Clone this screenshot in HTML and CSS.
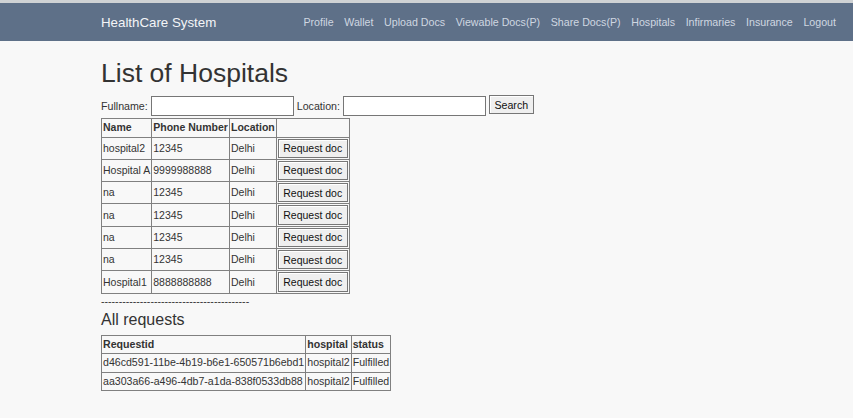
FILE: index.html
```html
<!DOCTYPE html>
<html>
<head>
<meta charset="utf-8">
<title>HealthCare System</title>
<link rel="stylesheet" href="styles.css">
</head>
<body>
<nav class="navbar">
  <a class="brand" href="#">HealthCare System</a>
  <ul class="nav-links">
    <li><a href="#">Profile</a></li>
    <li><a href="#">Wallet</a></li>
    <li><a href="#">Upload Docs</a></li>
    <li><a href="#">Viewable Docs(P)</a></li>
    <li><a href="#">Share Docs(P)</a></li>
    <li><a href="#">Hospitals</a></li>
    <li><a href="#">Infirmaries</a></li>
    <li><a href="#">Insurance</a></li>
    <li><a href="#">Logout</a></li>
  </ul>
</nav>
<main class="content">
  <h1 class="title">List of Hospitals</h1>
  <form class="search-form">
    <label>Fullname:</label>
    <input type="text" class="field">
    <label>Location:</label>
    <input type="text" class="field">
    <button type="button" class="btn search-btn">Search</button>
  </form>
  <table class="grid hospitals">
    <tr><th>Name</th><th>Phone Number</th><th>Location</th><th></th></tr>
    <tr><td>hospital2</td><td>12345</td><td>Delhi</td><td><button type="button" class="btn">Request doc</button></td></tr>
    <tr><td>Hospital A</td><td>9999988888</td><td>Delhi</td><td><button type="button" class="btn">Request doc</button></td></tr>
    <tr><td>na</td><td>12345</td><td>Delhi</td><td><button type="button" class="btn">Request doc</button></td></tr>
    <tr><td>na</td><td>12345</td><td>Delhi</td><td><button type="button" class="btn">Request doc</button></td></tr>
    <tr><td>na</td><td>12345</td><td>Delhi</td><td><button type="button" class="btn">Request doc</button></td></tr>
    <tr><td>na</td><td>12345</td><td>Delhi</td><td><button type="button" class="btn">Request doc</button></td></tr>
    <tr><td>Hospital1</td><td>8888888888</td><td>Delhi</td><td><button type="button" class="btn">Request doc</button></td></tr>
  </table>
  <div class="divider">------------------------------------------</div>
  <h3 class="subtitle">All requests</h3>
  <table class="grid requests">
    <tr><th>Requestid</th><th>hospital</th><th>status</th></tr>
    <tr><td>d46cd591-11be-4b19-b6e1-650571b6ebd1</td><td>hospital2</td><td>Fulfilled</td></tr>
    <tr><td>aa303a66-a496-4db7-a1da-838f0533db88</td><td>hospital2</td><td>Fulfilled</td></tr>
  </table>
</main>
</body>
</html>
```

FILE: styles.css
```css
* { box-sizing: border-box; }

body {
  margin: 0;
  background: #f8f8f8;
  color: #333;
  font-family: "Liberation Sans", Arial, sans-serif;
  font-size: 10.5px;
  line-height: 15px;
}

.navbar {
  display: flex;
  align-items: center;
  justify-content: space-between;
  height: 41px;
  border-top: 3px solid #cfd2d4;
  background: #5e7088;
  padding: 1px 17px 0 101px;
}

.brand {
  color: #f4f5f7;
  font-size: 13.3px;
  text-decoration: none;
}

.nav-links {
  display: flex;
  gap: 10.6px;
  list-style: none;
  margin: 0;
  padding: 0;
}

.nav-links a {
  color: #cfd7e1;
  font-size: 10.67px;
  text-decoration: none;
}

.content {
  padding-left: 101px;
}

.title {
  margin: 18px 0 0;
  font-size: 26.5px;
  font-weight: normal;
  line-height: 29px;
}

.search-form {
  display: flex;
  align-items: flex-start;
  gap: 3px;
  height: 20px;
  margin-top: 7px;
  font-size: 10.65px;
}

.search-form label {
  line-height: 20px;
  padding-top: 1px;
}

.field {
  width: 143px;
  height: 19.5px;
  margin-top: 1px;
  border: 1px solid #767676;
  background: #fff;
  padding: 1px 2px;
  font: inherit;
}

.btn {
  font-family: "Liberation Sans", Arial, sans-serif;
  font-size: 10.5px;
  color: #111;
  background: #efefef;
  border: 1px solid #767676;
  box-shadow: inset 1px 1px 0 #fff;
  padding: 0 4.5px;
  height: 19.3px;
  line-height: 16px;
}

.search-btn {
  font-size: 10.65px;
}

.grid {
  border-collapse: collapse;
  border: 1px solid #808080;
}

.grid th,
.grid td {
  border: 1px solid #808080;
  padding: 1px;
  line-height: 15.5px;
  text-align: left;
  white-space: nowrap;
  vertical-align: middle;
}

.grid th { font-weight: bold; }

.hospitals {
  margin-top: 3px;
}

.hospitals td {
  padding-top: 2px;
}

.hospitals th {
  padding-top: 1px;
}

.hospitals td .btn {
  display: block;
  margin-top: -1px;
}

.divider {
  line-height: 15px;
  font-size: 10.6px;
}

.subtitle {
  margin: 2px 0 0;
  font-size: 16px;
  font-weight: normal;
  line-height: 17.6px;
}

.requests {
  margin-top: 6.5px;
  font-size: 10.6px;
}
```
